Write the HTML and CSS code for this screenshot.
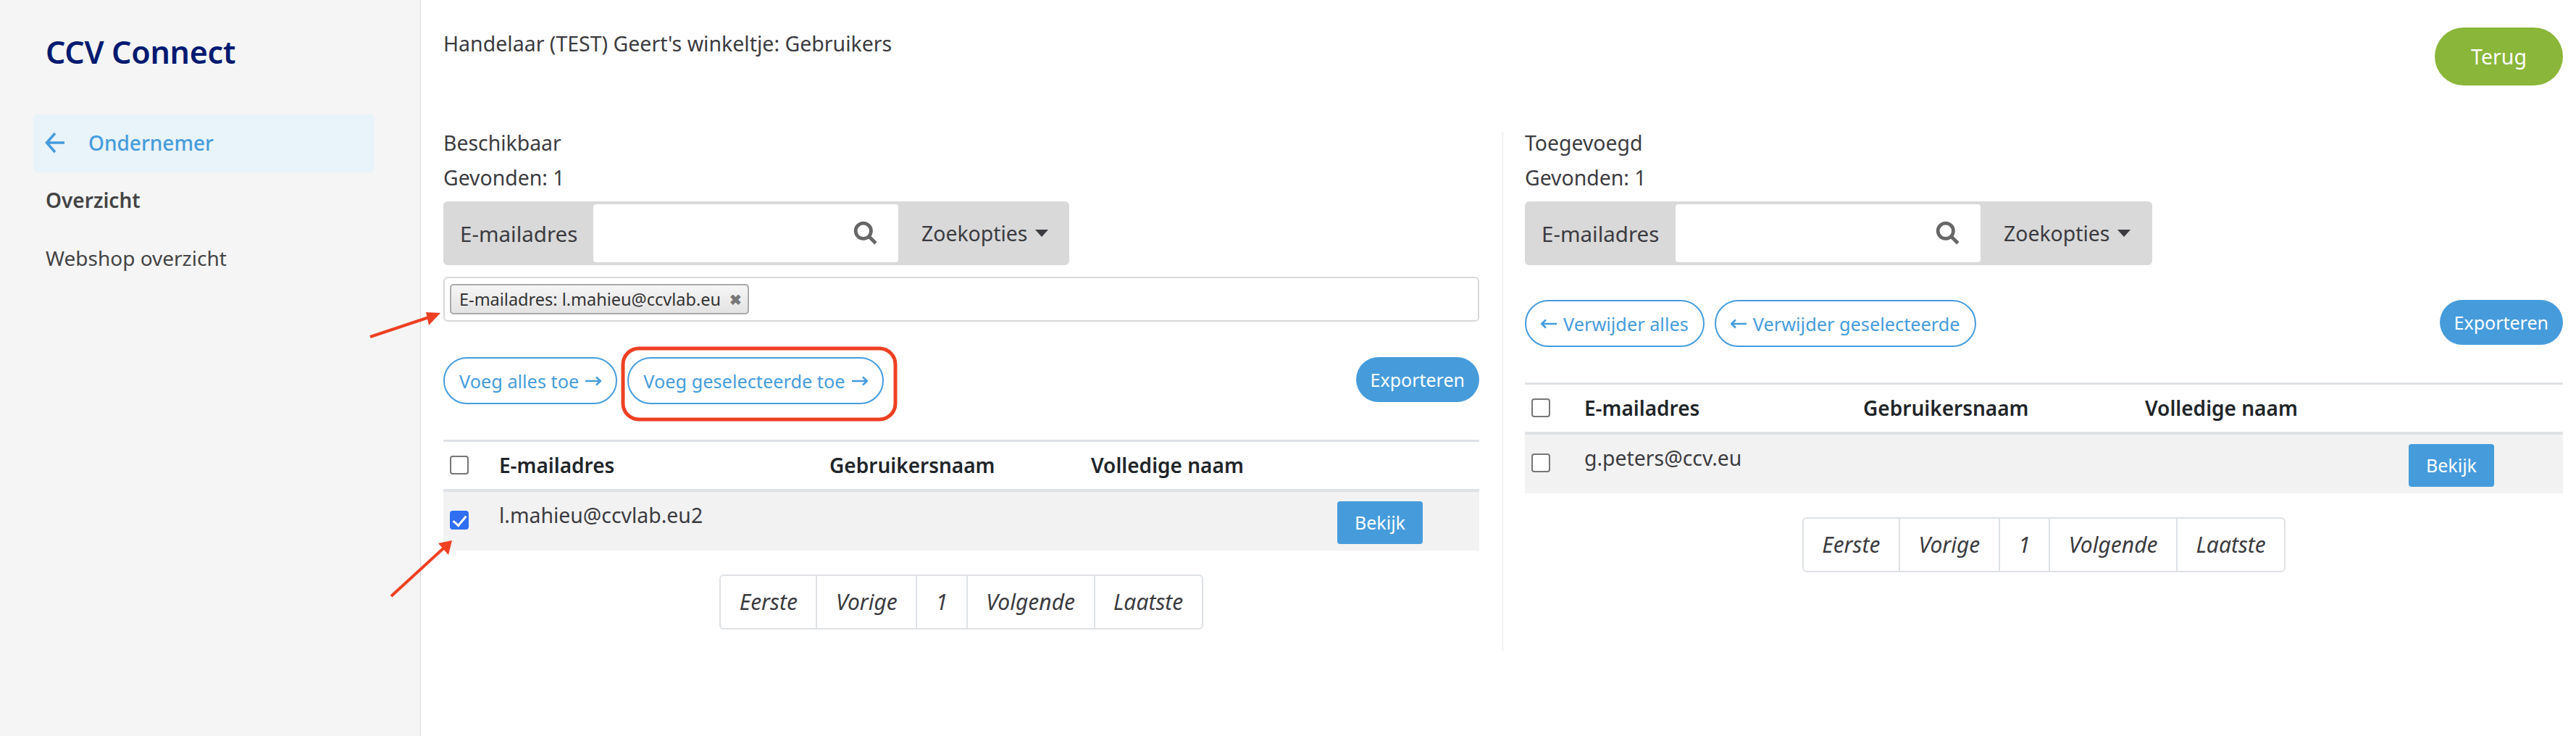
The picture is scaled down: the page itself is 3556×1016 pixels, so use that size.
FILE: index.html
```html
<!DOCTYPE html>
<html lang="en">
<head>
    <meta charset="UTF-8">
    <meta name="viewport" content="width=device-width, initial-scale=1.0">
    <title>CCV Connect</title>
    <link rel="stylesheet" href="styles.css">
</head>
<body>
    <aside class="sidebar">
        <div class="logo">CCV Connect</div>
        <a class="nav-back">
            <svg class="nav-arrow" viewBox="0 0 28 34"><path d="M27 17H3M14 4 2.500 17 14 30"/></svg>
            Ondernemer
        </a>
        <a class="nav-item nav-current">Overzicht</a>
        <a class="nav-item">Webshop overzicht</a>
    </aside>

    <main class="content">
        <div class="page-head">
            <div class="page-title">Handelaar (TEST) Geert's winkeltje: Gebruikers</div>
            <button type="button" class="btn-back">Terug</button>
        </div>

        <div class="panels">
            <section class="panel panel-left">
                <div class="panel-title">Beschikbaar</div>
                <div class="panel-title">Gevonden: 1</div>
                <div class="search-group">
                    <span class="search-label">E-mailadres</span>
                    <div class="search-input">
                        <svg class="search-icon" viewBox="0 0 32 32"><circle cx="13" cy="13" r="10"/><path d="M20.500 20.500 29 29"/></svg>
                    </div>
                    <span class="search-options">Zoekopties<i class="caret"></i></span>
                </div>
                <div class="tag-box">
                    <span class="tag">E-mailadres: l.mahieu@ccvlab.eu<b class="tag-x">&#10006;</b></span>
                </div>
                <div class="actions">
                    <button type="button" class="btn-line">Voeg alles toe
                        <svg class="btn-arrow" viewBox="0 0 22 16"><path d="M0 8H21M15 2.500 21 8 15 13.500"/></svg>
                    </button>
                    <button type="button" class="btn-line">Voeg geselecteerde toe
                        <svg class="btn-arrow" viewBox="0 0 22 16"><path d="M0 8H21M15 2.500 21 8 15 13.500"/></svg>
                    </button>
                    <button type="button" class="btn-export">Exporteren</button>
                </div>
                <table class="users users-left">
                    <colgroup><col class="col-check"><col class="col-mail"><col class="col-user"><col class="col-name"><col class="col-action"></colgroup>
                    <thead>
                        <tr><th><input type="checkbox"></th><th>E-mailadres</th><th>Gebruikersnaam</th><th>Volledige naam</th><th></th></tr>
                    </thead>
                    <tbody>
                        <tr><td><input type="checkbox" checked></td><td>l.mahieu@ccvlab.eu2</td><td></td><td></td><td><button type="button" class="btn-view">Bekijk</button></td></tr>
                    </tbody>
                </table>
                <div class="pager">
                    <span>Eerste</span><span>Vorige</span><span>1</span><span>Volgende</span><span>Laatste</span>
                </div>
            </section>

            <section class="panel panel-right">
                <div class="panel-title">Toegevoegd</div>
                <div class="panel-title">Gevonden: 1</div>
                <div class="search-group">
                    <span class="search-label">E-mailadres</span>
                    <div class="search-input">
                        <svg class="search-icon" viewBox="0 0 32 32"><circle cx="13" cy="13" r="10"/><path d="M20.500 20.500 29 29"/></svg>
                    </div>
                    <span class="search-options">Zoekopties<i class="caret"></i></span>
                </div>
                <div class="actions">
                    <button type="button" class="btn-line">
                        <svg class="btn-arrow" viewBox="0 0 22 16"><path d="M22 8H1M7 2.500 1 8 7 13.500"/></svg>
                        Verwijder alles
                    </button>
                    <button type="button" class="btn-line">
                        <svg class="btn-arrow" viewBox="0 0 22 16"><path d="M22 8H1M7 2.500 1 8 7 13.500"/></svg>
                        Verwijder geselecteerde
                    </button>
                    <button type="button" class="btn-export">Exporteren</button>
                </div>
                <table class="users users-right">
                    <colgroup><col class="col-check"><col class="col-mail"><col class="col-user"><col class="col-name"><col class="col-action"></colgroup>
                    <thead>
                        <tr><th><input type="checkbox"></th><th>E-mailadres</th><th>Gebruikersnaam</th><th>Volledige naam</th><th></th></tr>
                    </thead>
                    <tbody>
                        <tr><td><input type="checkbox"></td><td>g.peters@ccv.eu</td><td></td><td></td><td><button type="button" class="btn-view">Bekijk</button></td></tr>
                    </tbody>
                </table>
                <div class="pager">
                    <span>Eerste</span><span>Vorige</span><span>1</span><span>Volgende</span><span>Laatste</span>
                </div>
            </section>
        </div>
    </main>

    <!-- red marks drawn on top of the screenshot -->
    <svg class="marks" viewBox="0 0 3556 1016">
        <rect class="mark-line" x="860" y="481" width="376" height="98" rx="22"/>
        <path class="mark-line mark-thin" d="M511 465 592 438"/>
        <path class="mark-fill" d="M608 432 588 431 592 449Z"/>
        <path class="mark-line mark-thin" d="M540 823 612 757"/>
        <path class="mark-fill" d="M624 746 605 750 619 766Z"/>
    </svg>
</body>
</html>
```

FILE: styles.css
```css
* {
    box-sizing: border-box;
}
body {
    display: flex;
    min-height: 100vh;
    margin: 0;
    font-family: "Noto Sans", "Open Sans", sans-serif;
    font-size: 28.400px;
    color: #3b3b40;
    background: #fff;
}
button {
    font-family: inherit;
    cursor: pointer;
}

/* sidebar */
.sidebar {
    flex: 0 0 581px;
    padding: 46px 63px 0 46px;
    background: #f5f5f5;
    border-right: 1px solid #dcdcdc;
}
.logo {
    margin-left: 17px;
    font-size: 43px;
    font-weight: 600;
    line-height: 52px;
    letter-spacing: -0.300px;
    color: #001a70;
}
.nav-back {
    display: flex;
    align-items: center;
    gap: 32px;
    height: 80px;
    margin-top: 60px;
    padding: 0 0 3px 16px;
    border-radius: 6px;
    background: #e8f3fa;
    font-size: 28px;
    font-weight: 500;
    color: #469cdb;
}
.nav-arrow {
    width: 28px;
    height: 34px;
    fill: none;
    stroke: #469cdb;
    stroke-width: 3.500;
}
.nav-item {
    display: block;
    margin-left: 17px;
    height: 80px;
    line-height: 77px;
    font-size: 28px;
    color: #444;
}
.nav-current {
    font-weight: 600;
}

/* header */
.content {
    flex: 1;
    padding: 38px 18px 0 31px;
}
.page-head {
    display: flex;
    justify-content: space-between;
    align-items: flex-start;
}
.page-title {
    font-size: 28.500px;
    line-height: 44px;
}
.btn-back {
    width: 177px;
    height: 80px;
    border: none;
    border-radius: 40px;
    background: #8ab63a;
    font-size: 28.500px;
    color: #fff;
}

/* panels */
.panels {
    display: grid;
    grid-template-columns: 1463px 1fr;
    margin-top: 64px;
}
.panel-left {
    padding-right: 32px;
    padding-bottom: 30px;
    border-right: 1px solid #e6e6e6;
}
.panel-right {
    padding-left: 30px;
}
.panel-title {
    margin-bottom: 18px;
    line-height: 30px;
}

/* search */
.search-group {
    display: flex;
    height: 88px;
    padding: 4px 0;
    border-radius: 6px;
    background: #d9d9d9;
}
.panel-left .search-group {
    width: 864px;
}
.panel-right .search-group {
    width: 866px;
}
.search-label {
    display: flex;
    align-items: center;
    width: 207px;
    padding-left: 23px;
    font-size: 29.500px;
}
.panel-right .search-label {
    width: 208px;
}
.search-input {
    display: flex;
    align-items: center;
    justify-content: flex-end;
    width: 421px;
    padding-right: 28px;
    border-radius: 4px;
    background: #fff;
}
.search-icon {
    width: 34px;
    height: 34px;
    fill: none;
    stroke: #666;
    stroke-width: 4.500;
}
.search-options {
    display: flex;
    align-items: center;
    padding-left: 32px;
}
.caret {
    margin-left: 11px;
    border-top: 10px solid #3b3b40;
    border-left: 9px solid transparent;
    border-right: 9px solid transparent;
}

/* chosen filter */
.tag-box {
    display: flex;
    align-items: center;
    height: 62px;
    margin-top: 16px;
    padding-left: 7px;
    border: 2px solid #d8d8d8;
    border-radius: 6px;
}
.tag {
    display: flex;
    align-items: center;
    height: 42px;
    padding: 0 8px 0 11px;
    border: 2px solid #aaa;
    border-radius: 5px;
    background: linear-gradient(#f6f6f6, #e3e3e3);
    font-size: 23.500px;
    color: #333;
}
.tag-x {
    margin-left: 12px;
    font-size: 20px;
    color: #777;
}

/* buttons */
.actions {
    display: flex;
    align-items: flex-start;
    gap: 14px;
    height: 65px;
    margin-top: 49px;
}
.panel-right .actions {
    margin-top: 48px;
}
.btn-line {
    display: flex;
    align-items: center;
    gap: 9px;
    height: 65px;
    padding: 0 20px;
    border: 2px solid #469cdb;
    border-radius: 33px;
    background: #fff;
    font-size: 25.300px;
    color: #469cdb;
}
.btn-arrow {
    width: 22px;
    height: 16px;
    fill: none;
    stroke: #469cdb;
    stroke-width: 2.500;
}
.btn-export {
    height: 62px;
    margin-left: auto;
    padding: 0 20px;
    border: none;
    border-radius: 31px;
    background: #469cdb;
    font-size: 25px;
    color: #fff;
}
.btn-view {
    display: block;
    width: 118px;
    height: 59px;
    padding: 0;
    border: none;
    border-radius: 4px;
    background: #469cdb;
    font-size: 25px;
    color: #fff;
}

/* tables */
.users {
    width: 100%;
    margin-top: 49px;
    border-collapse: collapse;
    table-layout: fixed;
}
.users th {
    height: 68px;
    padding: 0;
    border-top: 3px solid #dee2e6;
    border-bottom: 4px solid #dee2e6;
    text-align: left;
    font-size: 28px;
    font-weight: 600;
    color: #212529;
}
.users td {
    height: 83px;
    padding: 13px 0 0;
    background: #f2f2f2;
    vertical-align: top;
}
.users input {
    display: block;
    width: 26px;
    height: 26px;
    margin: 0 0 0 9px;
    appearance: none;
    border: 2px solid #767676;
    border-radius: 4px;
    background: #fff;
}
.users input:checked {
    position: relative;
    border-color: #2f6ff0;
    background: #2f6ff0;
}
.users input:checked::after {
    content: "";
    position: absolute;
    left: 6px;
    top: 1px;
    width: 8px;
    height: 15px;
    border: solid #fff;
    border-width: 0 3px 3px 0;
    transform: rotate(40deg);
}
.users td input {
    margin-top: 13px;
}
.users-left .col-check {
    width: 77px;
}
.users-left .col-mail {
    width: 456px;
}
.users-left .col-user {
    width: 361px;
}
.users-left .col-name {
    width: 340px;
}
.users-right .col-check {
    width: 82px;
}
.users-right .col-mail {
    width: 385px;
}
.users-right .col-user {
    width: 389px;
}
.users-right .col-name {
    width: 364px;
}

/* pagination */
.pager {
    display: flex;
    width: max-content;
    height: 76px;
    margin: 33px auto 0;
    border: 2px solid #dee2e6;
    border-radius: 6px;
    font-size: 30px;
    font-style: italic;
}
.pager span {
    display: flex;
    align-items: center;
    padding: 0 25.500px;
    border-left: 2px solid #dee2e6;
}
.pager span:first-child {
    border-left: none;
}

/* annotations */
.marks {
    position: absolute;
    top: 0;
    left: 0;
    width: 3556px;
    height: 1016px;
    pointer-events: none;
}
.mark-line {
    fill: none;
    stroke: #ee4023;
    stroke-width: 5;
}
.mark-thin {
    stroke-width: 4;
}
.mark-fill {
    fill: #ee4023;
}
```
